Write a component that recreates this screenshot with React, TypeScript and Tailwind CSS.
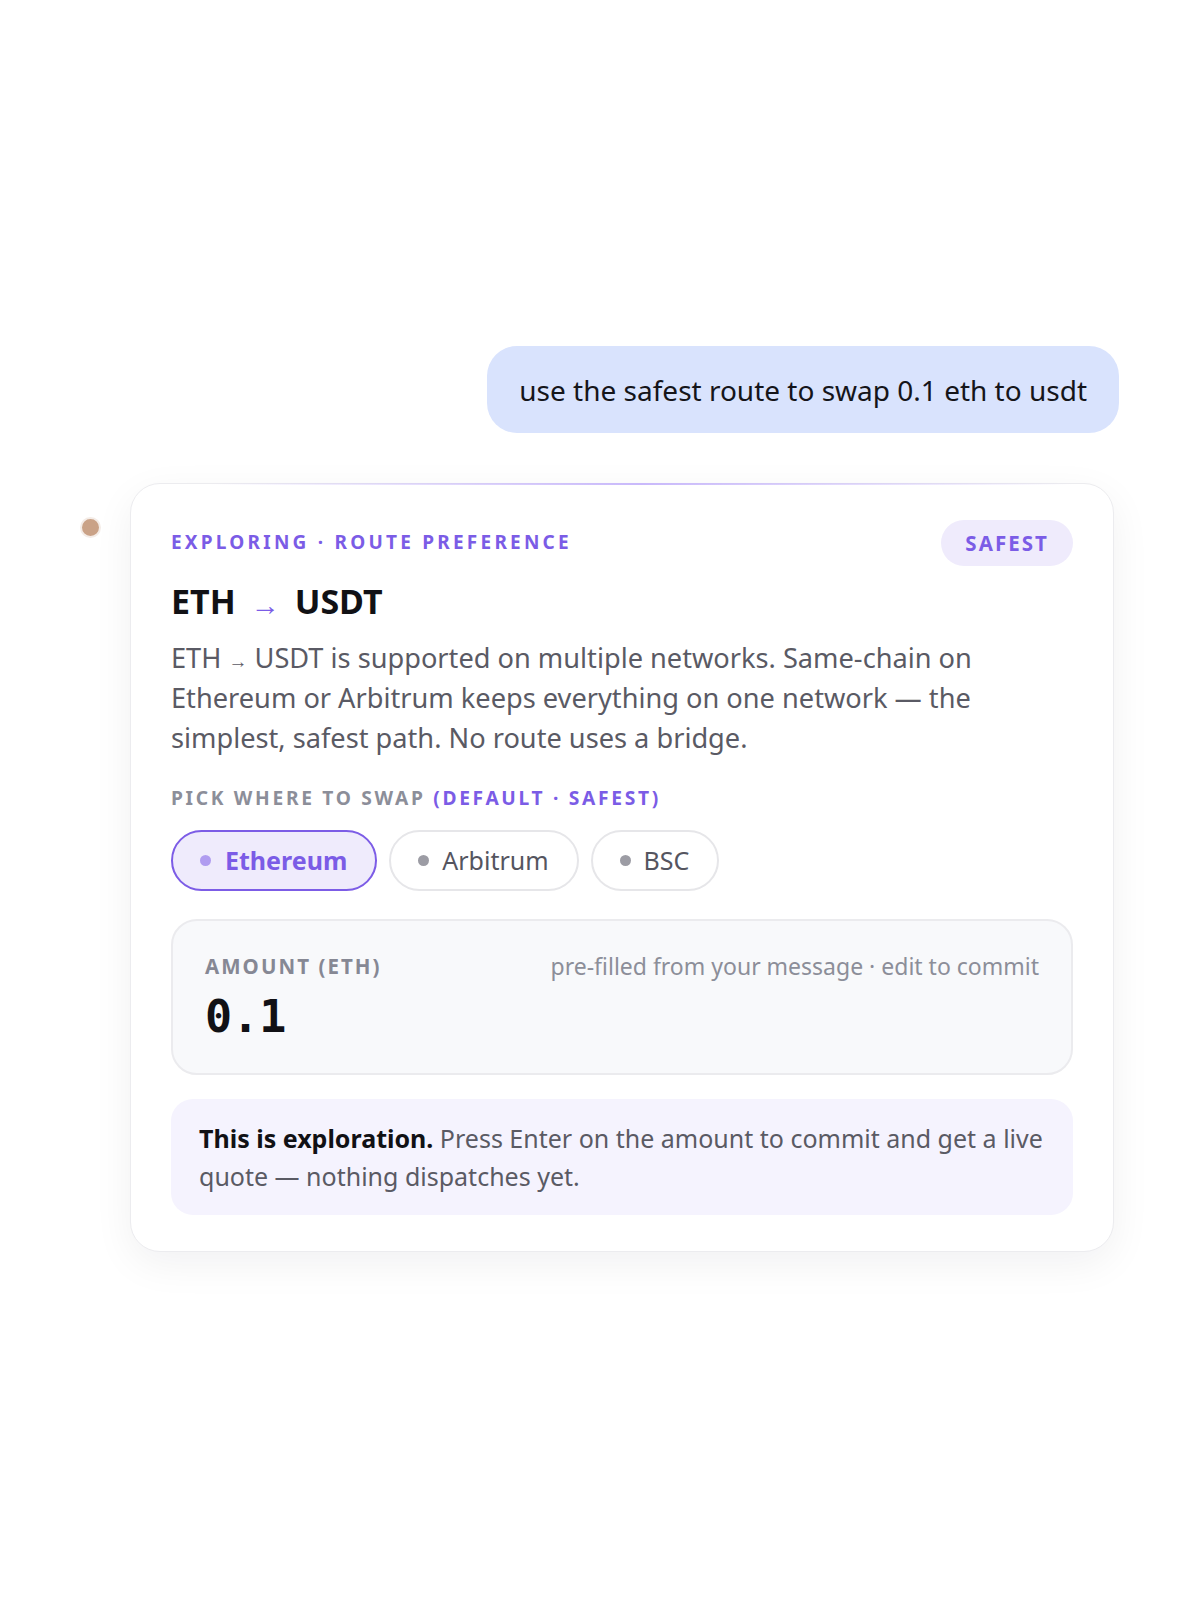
import React from "react";

function Chip({ label, active }: { label: string; active?: boolean }) {
  if (active) {
    return (
      <div className="flex h-[61px] items-center gap-[14px] rounded-full border-2 border-[#7c5ce6] bg-[#efebfc] pl-[27px] pr-[28px] text-[25px] font-bold text-[#7b5ce6]">
        <span className="h-[11px] w-[11px] rounded-full bg-[#b09cf0]" />
        <span>{label}</span>
      </div>
    );
  }
  return (
    <div className="flex h-[61px] items-center gap-[13px] rounded-full border-2 border-[#e6e6e9] bg-white pl-[27px] pr-[28px] text-[25px] text-[#55555f]">
      <span className="h-[11px] w-[11px] rounded-full bg-[#9c9ca4]" />
      <span>{label}</span>
    </div>
  );
}

export default function App() {
  return (
    <div
      className="min-h-[1600px] w-[1200px] bg-white"
      style={{ fontFamily: '"Noto Sans", "Open Sans", sans-serif' }}
    >
      <div className="flex flex-col pt-[346px]">
        <div className="flex justify-end pr-[81px]">
          <div className="flex h-[87px] items-center rounded-[30px] bg-[#d9e3fd] px-[32px] text-[28px] text-[#15151a]">
            use the safest route to swap 0.1 eth to usdt
          </div>
        </div>

        <div className="mt-[50px] flex items-start pl-[80px]">
          <div className="mt-[34px] h-[21px] w-[21px] shrink-0 rounded-full border-[2px] border-[#f4ece7] bg-[#caa287]" />
          <div className="relative ml-[29px] w-[984px] rounded-[30px] border border-[#ececef] bg-white px-[40px] pb-[36px] pt-[36px] shadow-[0_12px_40px_rgba(20,20,40,0.06)]">
            <div className="pointer-events-none absolute left-[80px] right-[40px] top-[-1px] h-[2px] bg-gradient-to-r from-transparent via-[#c9b9fb] to-transparent" />
            <div className="flex items-center justify-between">
              <div className="-mt-[3px] text-[19px] font-bold leading-[24px] tracking-[0.17em] text-[#7b5ce6]">
                EXPLORING · ROUTE PREFERENCE
              </div>
              <div className="flex h-[46px] items-center rounded-full bg-[#efebfc] px-[24px] text-[20.5px] font-bold tracking-[0.1em] text-[#7b5ce6]">
                SAFEST
              </div>
            </div>

            <div className="mt-[12px] flex items-center text-[34px] font-bold leading-[40px] text-[#111115]">
              <span>ETH</span>
              <span className="mx-[15px] mt-[6px] text-[29px] font-normal leading-[40px] text-[#7b5ce6]">→</span>
              <span>USDT</span>
            </div>

            <p className="mt-[14px] text-[27.2px] leading-[40px] text-[#5a5a64]">
              ETH <span className="text-[19px] leading-none">→</span> USDT is supported on multiple networks. Same-chain
              on Ethereum or Arbitrum keeps everything on one network — the simplest, safest path. No route uses a
              bridge.
            </p>

            <div className="mt-[28px] text-[19.2px] font-bold leading-[24px] tracking-[0.14em] text-[#8c8e99]">
              PICK WHERE TO SWAP <span className="text-[#7b5ce6]">(DEFAULT · SAFEST)</span>
            </div>

            <div className="mt-[20px] flex gap-[12px]">
              <Chip label="Ethereum" active />
              <Chip label="Arbitrum" />
              <Chip label="BSC" />
            </div>

            <div className="mt-[28px] h-[156px] rounded-[26px] border-2 border-[#ebebee] bg-[#f8f9fb] px-[32px] pt-[28px]">
              <div className="flex items-center justify-between">
                <div className="text-[20.5px] font-bold tracking-[0.1em] text-[#868894]">AMOUNT (ETH)</div>
                <div className="text-[23px] text-[#8c8e99]">pre-filled from your message · edit to commit</div>
              </div>
              <div
                className="mt-[8px] text-[45px] font-bold leading-[50px] text-[#111115]"
                style={{ fontFamily: '"DejaVu Sans Mono", monospace' }}
              >
                0.1
              </div>
            </div>

            <div className="mt-[24px] rounded-[22px] bg-[#f5f3fe] px-[28px] py-[20px] text-[25px] leading-[38px] text-[#5a5a64]">
              <span className="font-bold text-[#111115]">This is exploration.</span> Press Enter on the amount to
              commit and get a live quote — nothing dispatches yet.
            </div>
          </div>
        </div>
      </div>
    </div>
  );
}
